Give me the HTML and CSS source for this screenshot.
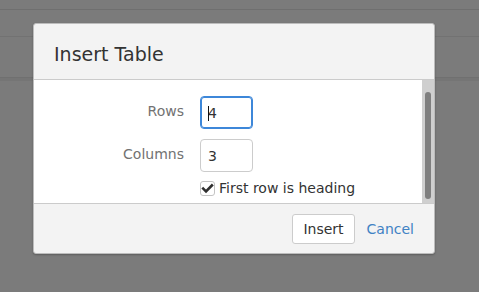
FILE: index.html
```html
<!DOCTYPE html>
<html lang="en">
<head>
  <meta charset="UTF-8">
  <meta name="viewport" content="width=device-width, initial-scale=1">
  <title>Insert Table</title>
  <link rel="stylesheet" href="styles.css">
</head>
<body>

  <div class="page">
    <div class="page-top"></div>
    <div class="page-toolbar"></div>
    <div class="page-ruler"></div>
  </div>

  <div class="modal">
    <div class="modal-header">
      <h4 class="modal-title">Insert Table</h4>
    </div>

    <div class="modal-body">
      <div class="form">
        <label class="form-label" for="rows">Rows</label>
        <div class="field">
          <input type="text" id="rows" class="form-input is-focused" value="4">
          <span class="caret"></span>
        </div>

        <label class="form-label" for="cols">Columns</label>
        <div class="field">
          <input type="text" id="cols" class="form-input" value="3">
        </div>

        <span></span>
        <label class="check">
          <span class="check-box">
            <svg width="13" height="13" viewBox="0 0 13 13"><path d="M2.2 6.6 L5 9.4 L10.9 3.4" fill="none" stroke="#2f2f2f" stroke-width="2.6" stroke-linecap="square"/></svg>
          </span>
          First row is heading
        </label>
      </div>

      <div class="scrollbar"><div class="scrollbar-thumb"></div></div>
    </div>

    <div class="modal-footer">
      <button class="btn">Insert</button>
      <button class="btn-link">Cancel</button>
    </div>
  </div>

</body>
</html>
```

FILE: styles.css
```css
body {
  margin: 0;
  font-family: "DejaVu Sans", sans-serif;
  font-size: 14px;
  color: #333;
  background: #7b7b7b;
  height: 292px;
  overflow: hidden;
}
.page-top {
  height: 9px;
  border-bottom: 1px solid #6f6f6f;
}
.page-toolbar {
  height: 26px;
  border-bottom: 1px solid #727272;
}
.page-ruler {
  height: 40px;
  border-bottom: 1px solid #707070;
  box-shadow: 0 3px 0 #757575;
}
.modal {
  position: absolute;
  left: 33px;
  top: 23px;
  width: 402px;
  box-sizing: border-box;
  border: 1px solid #bcbcbc;
  border-radius: 3px;
  background: #f3f3f3;
  box-shadow: 0 1px 2px rgba(0, 0, 0, 0.25);
}
.modal-header {
  height: 55px;
  padding: 0 20px;
  display: flex;
  align-items: center;
  border-bottom: 1px solid #cbcbcb;
}
.modal-title {
  margin: 0;
  font-size: 19px;
  font-weight: normal;
  color: #333;
  padding-top: 5px;
}
.modal-body {
  display: flex;
  height: 123px;
  background: #fff;
}
.form {
  flex: 1;
  display: grid;
  grid-template-columns: 150px 53px;
  column-gap: 16px;
  row-gap: 10px;
  align-content: start;
  padding-top: 16px;
}
.form-label {
  text-align: right;
  align-self: center;
  color: #727272;
  padding-bottom: 4px;
}
.field {
  position: relative;
}
.form-input {
  display: block;
  width: 53px;
  height: 33px;
  box-sizing: border-box;
  border: 1px solid #cccccc;
  border-radius: 4px;
  padding: 0 7px;
  font: inherit;
  color: #333;
  background: #fff;
  outline: none;
}
.form-input.is-focused {
  border-color: #3d87d9;
  box-shadow: inset 0 0 0 1px #3d87d9;
}
.caret {
  position: absolute;
  left: 8px;
  top: 10px;
  width: 1px;
  height: 15px;
  background: #111;
}
.check {
  display: flex;
  align-items: center;
  gap: 4px;
  white-space: nowrap;
  margin-top: -2px;
  color: #333;
}
.check-box {
  width: 15px;
  height: 15px;
  box-sizing: border-box;
  border: 1px solid #c4c4c4;
  border-radius: 3px;
  background: #fff;
  display: flex;
  align-items: center;
  justify-content: center;
}
.scrollbar {
  width: 12px;
  background: #cfcfcf;
  padding: 12px 3px 4px;
  box-sizing: border-box;
}
.scrollbar-thumb {
  height: 100%;
  border-radius: 3px;
  background: #7f7f7f;
}
.modal-footer {
  height: 49px;
  border-top: 1px solid #cbcbcb;
  display: flex;
  align-items: center;
  justify-content: flex-end;
  gap: 12px;
  padding-right: 20px;
}
.btn {
  height: 30px;
  padding: 0 10px;
  border: 1px solid #cccccc;
  border-radius: 3px;
  background: #fff;
  font: inherit;
  color: #333;
}
.btn-link {
  padding: 0;
  border: 0;
  background: none;
  font: inherit;
  color: #3f82c4;
}
```
